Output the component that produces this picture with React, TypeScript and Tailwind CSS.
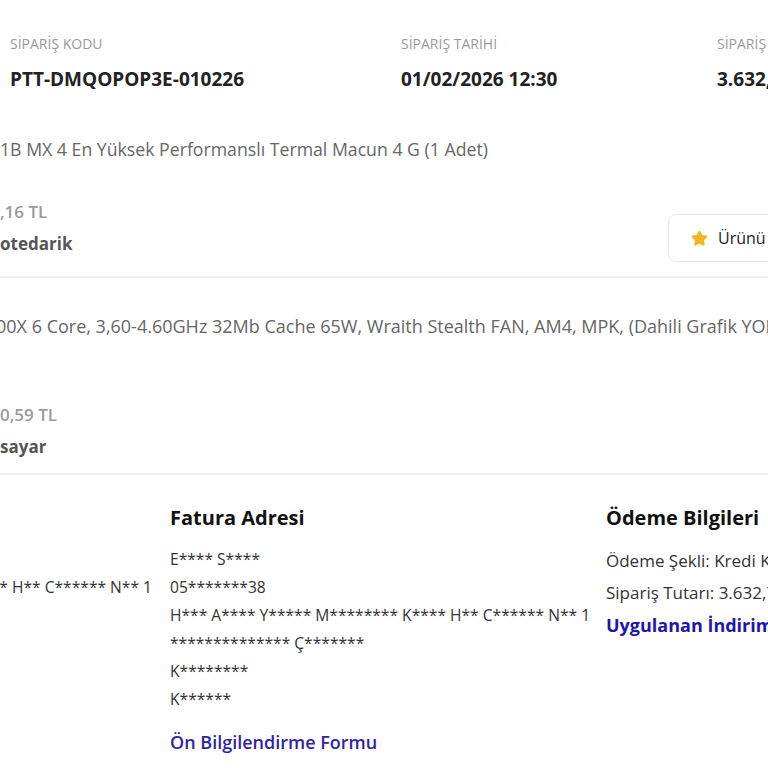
import React from 'react';
import { Star } from 'lucide-react';

const summary = [
  { label: 'SİPARİŞ KODU', value: 'PTT-DMQOPOP3E-010226', width: 'w-[401px] pl-[10px]' },
  { label: 'SİPARİŞ TARİHİ', value: '01/02/2026 12:30', width: 'w-[316px]' },
  { label: 'SİPARİŞ TUTARI', value: '3.632,75 TL', width: 'w-[300px]' },
];

const faturaLines = [
  'E**** S****',
  '05*******38',
  'H*** A**** Y***** M******** K**** H** C****** N** 1',
  '************** Ç*******',
  'K********',
  'K******',
];

export default function App() {
  return (
    <div className="w-[768px] h-[768px] overflow-hidden bg-white whitespace-nowrap font-['Open_Sans',sans-serif]">
      {/* sipariş özeti */}
      <div className="flex pt-[34px]">
        {summary.map((s) => (
          <div key={s.label} className={`shrink-0 ${s.width}`}>
            <p className="text-[14px] leading-[20px] text-[#9a9a9a]">{s.label}</p>
            <p className="mt-[12px] text-[19px] leading-[26px] font-bold text-[#222]">{s.value}</p>
          </div>
        ))}
      </div>

      {/* ürün 1 */}
      <div className="mt-[45px] border-b-2 border-[#efefef] pb-[14px]">
        <p className="text-[17.7px] leading-[24px] text-[#666]">1B MX 4 En Yüksek Performanslı Termal Macun 4 G (1 Adet)</p>
        <div className="flex items-start justify-between mt-[39px]">
          <div>
            <p className="text-[17px] leading-[24px] font-semibold text-[#9a9a9a]">,16 TL</p>
            <p className="mt-[8px] text-[17px] leading-[24px] font-bold text-[#555]">otedarik</p>
          </div>
          <button className="mt-[14px] ml-auto w-[200px] -mr-[100px] h-[48px] flex items-center gap-[10px] pl-[22px] rounded-[8px] border border-[#e6e6e6] bg-white text-[16px] text-[#222]">
            <Star className="shrink-0 w-[17px] h-[17px] text-[#f5b623] fill-[#f5b623]" />
            Ürünü Değerlendir
          </button>
        </div>
      </div>

      {/* ürün 2 */}
      <div className="pt-[36px] border-b-2 border-[#efefef] pb-[14px]">
        <p className="-ml-[4px] text-[18px] leading-[24px] text-[#666]">
          00X 6 Core, 3,60-4.60GHz 32Mb Cache 65W, Wraith Stealth FAN, AM4, MPK, (Dahili Grafik YOK)
        </p>
        <p className="mt-[65px] text-[17px] leading-[24px] font-semibold text-[#9a9a9a]">0,59 TL</p>
        <p className="mt-[8px] text-[17px] leading-[24px] font-bold text-[#555]">sayar</p>
      </div>

      {/* adres ve ödeme */}
      <div className="flex pt-[29px] text-[15.6px] text-[#333]">
        <div className="w-[170px] shrink-0 flex flex-col items-end pr-[18px] pt-[69px]">
          <p className="leading-[28px]">* H** C****** N** 1</p>
        </div>
        <div className="w-[436px] shrink-0">
          <h3 className="text-[20px] leading-[28px] font-bold text-[#111]">Fatura Adresi</h3>
          <div className="mt-[13px]">
            {faturaLines.map((l) => (
              <p key={l} className="leading-[28px]">{l}</p>
            ))}
          </div>
          <a className="block mt-[15px] text-[18px] leading-[28px] font-semibold text-[#3023a8]">Ön Bilgilendirme Formu</a>
        </div>
        <div>
          <h3 className="text-[20px] leading-[28px] font-bold text-[#111]">Ödeme Bilgileri</h3>
          <div className="mt-[13px] text-[17px]">
            <p className="leading-[32px]">Ödeme Şekli: Kredi Kartı</p>
            <p className="leading-[32px]">Sipariş Tutarı: 3.632,75 TL</p>
            <p className="leading-[32px] text-[18px] font-bold text-[#1d16b0]">Uygulanan İndirimler</p>
          </div>
        </div>
      </div>
    </div>
  );
}
